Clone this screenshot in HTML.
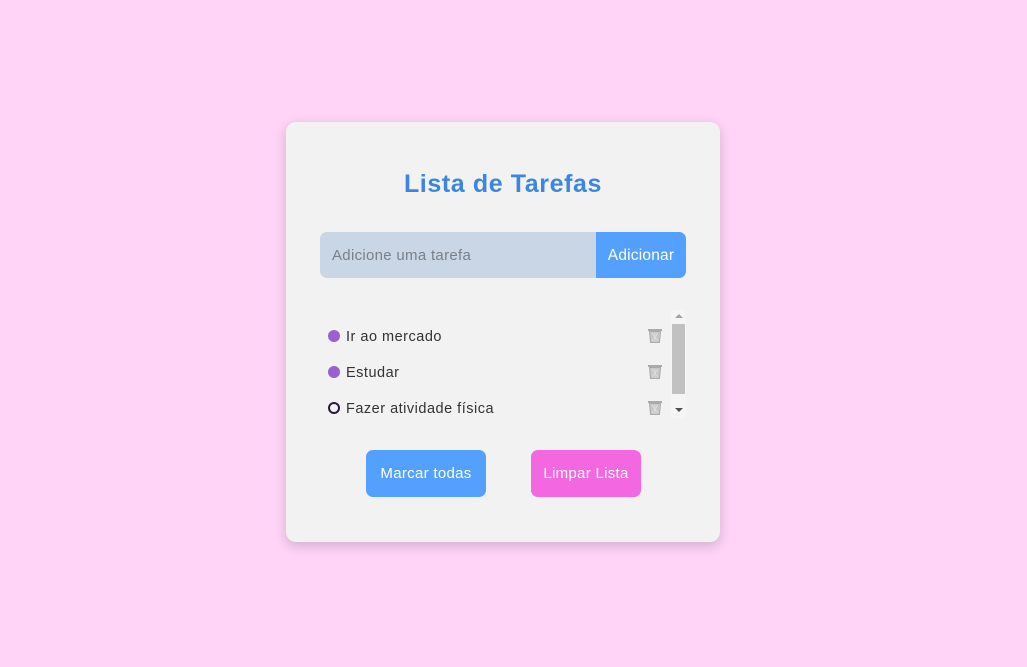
<!DOCTYPE html>
<html><head><style>
*{box-sizing:border-box;margin:0;padding:0}
body{width:1027px;height:667px;background:#ffd4f7;font-family:"Liberation Sans",sans-serif;position:relative;overflow:hidden}
.card{position:absolute;left:286px;top:122px;width:434px;height:420px;background:#f2f2f2;border-radius:10px;box-shadow:0 4px 12px rgba(0,0,0,0.18)}
h1{position:absolute;left:286px;width:434px;top:170px;text-align:center;color:#3a86e0;font-size:25px;font-weight:bold;letter-spacing:0.6px}
.inp{position:absolute;left:320px;top:232px;width:366px;height:46px;background:#c8d6e5;border-radius:7px;overflow:hidden}
.inp span{position:absolute;left:12px;top:15px;font-size:15px;color:#7a7f88;letter-spacing:0.3px}
.inp b{position:absolute;right:0;top:0;width:90px;height:46px;background:#54a0ff;color:#fff;font-weight:normal;font-size:15.5px;text-align:center;line-height:48px;letter-spacing:0.2px}
.item{position:absolute;left:328px;font-size:14.5px;color:#333;letter-spacing:0.5px}
.dot{position:absolute;left:0;top:2px;width:12px;height:12px;border-radius:50%;background:#9b5fce}
.dot.o{background:none;border:2px solid #2b1a3a}
.item span{position:absolute;left:18px;top:1px;white-space:nowrap}
.trash{position:absolute;left:648px;width:14px;height:14px}
.btn{position:absolute;top:450px;height:47px;border-radius:7px;color:#fff;font-size:15px;text-align:center;line-height:48px;letter-spacing:0.3px}
</style></head><body>
<div class="card"></div>
<h1>Lista de Tarefas</h1>
<div class="inp"><span>Adicione uma tarefa</span><b>Adicionar</b></div>
<div class="item" style="top:328px"><div class="dot"></div><span>Ir ao mercado</span></div>
<div class="item" style="top:364px"><div class="dot"></div><span>Estudar</span></div>
<div class="item" style="top:400px"><div class="dot o"></div><span>Fazer atividade física</span></div>
<svg class="trash" style="top:329px" viewBox="0 0 14 14"><rect x="0" y="0" width="14" height="2" fill="#aaa"/><path d="M1.5 2.5h11l-1 11h-9z" fill="#c8c8c8" stroke="#aaa"/><path d="M4 4l6 8M10 4l-6 8M7 4v9" stroke="#e0e0e0" stroke-width=".7"/></svg>
<svg class="trash" style="top:365px" viewBox="0 0 14 14"><rect x="0" y="0" width="14" height="2" fill="#aaa"/><path d="M1.5 2.5h11l-1 11h-9z" fill="#c8c8c8" stroke="#aaa"/><path d="M4 4l6 8M10 4l-6 8M7 4v9" stroke="#e0e0e0" stroke-width=".7"/></svg>
<svg class="trash" style="top:401px" viewBox="0 0 14 14"><rect x="0" y="0" width="14" height="2" fill="#aaa"/><path d="M1.5 2.5h11l-1 11h-9z" fill="#c8c8c8" stroke="#aaa"/><path d="M4 4l6 8M10 4l-6 8M7 4v9" stroke="#e0e0e0" stroke-width=".7"/></svg>
<div style="position:absolute;left:671px;top:310px;width:15px;height:108px;background:#f5f5f5"></div>
<div style="position:absolute;left:672px;top:324px;width:13px;height:70px;background:#c1c1c1"></div>
<div style="position:absolute;left:675px;top:314px;border:4px solid transparent;border-bottom:4px solid #a3a3a3;border-top:0"></div>
<div style="position:absolute;left:675px;top:408px;border:4px solid transparent;border-top:4px solid #505050;border-bottom:0"></div>
<div class="btn" style="left:366px;width:120px;background:#54a0ff">Marcar todas</div>
<div class="btn" style="left:531px;width:110px;background:#f368e0">Limpar Lista</div>
</body></html>
